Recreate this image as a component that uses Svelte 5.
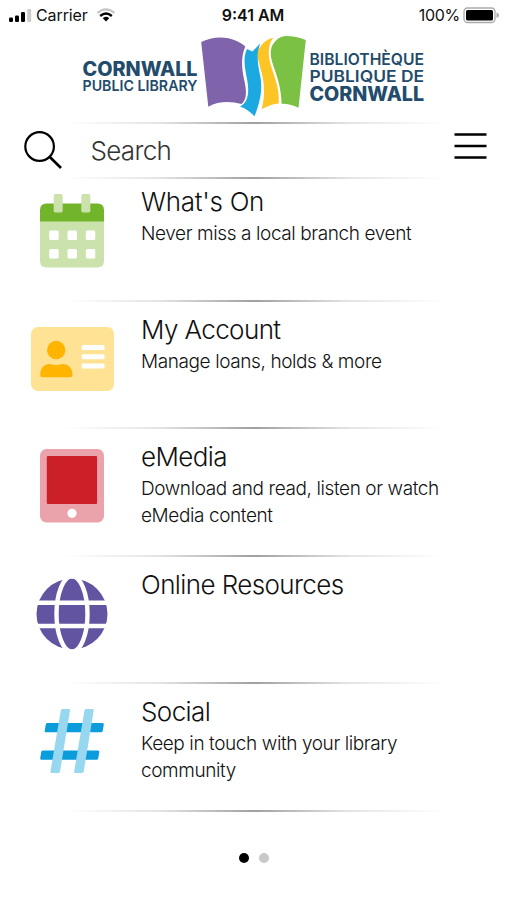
<script>
  const items = [
    { icon: 'calendar', title: "What's On", text: 'Never miss a local branch event' },
    { icon: 'card', title: 'My Account', text: 'Manage loans, holds & more' },
    { icon: 'tablet', title: 'eMedia', text: 'Download and read, listen or watch eMedia content' },
    { icon: 'globe', title: 'Online Resources', text: '' },
    { icon: 'hash', title: 'Social', text: 'Keep in touch with your library community' }
  ]

  const pages = 2
  let page = $state(0)
</script>

<div class="app">
  <div class="status">
    <div class="status-side">
      <svg width="23" height="13" viewBox="0 0 23 13">
        <rect x="0" y="8.5" width="4" height="4.5" rx="1.2" />
        <rect x="6" y="6.5" width="4" height="6.5" rx="1.2" />
        <rect x="12" y="3" width="4" height="10" rx="1.2" />
        <rect x="18.2" y="0" width="4" height="13" rx="1.2" fill="#ccc" />
      </svg>
      <span class="carrier">Carrier</span>
      <svg class="wifi" width="20" height="14" viewBox="0 0 20 14">
        <path d="M1.5 4.8Q10-2.2 18.5 4.8" fill="none" stroke="#c4c4c4" stroke-width="2.2" />
        <path d="M4.2 8Q10 3 15.8 8" fill="none" stroke="#000" stroke-width="2.4" />
        <path d="M6.8 10.2Q10 7.4 13.2 10.2L10 13.4Z" />
      </svg>
    </div>
    <span class="time">9:41 AM</span>
    <div class="status-side right">
      <span class="percent">100%</span>
      <svg width="37" height="17" viewBox="0 0 37 17">
        <rect x="1" y="1" width="31" height="14.5" rx="3.5" fill="#fff" stroke="#aaa" stroke-width="1.3" />
        <rect x="3" y="3" width="27" height="10.5" rx="1.5" />
        <path d="M33.5 5.6Q36 6 36 8.3Q36 10.6 33.5 11Z" fill="#aaa" />
      </svg>
    </div>
  </div>

  <header>
    <svg class="logo" width="350" height="92" viewBox="78.500 30 350 92">
      <g class="logo-text">
        <text x="82" y="75.5" font-size="19.5" font-weight="800" textLength="115" lengthAdjust="spacingAndGlyphs">CORNWALL</text>
        <text x="82" y="91.3" font-size="15" font-weight="600" textLength="115" lengthAdjust="spacingAndGlyphs">PUBLIC LIBRARY</text>
        <text x="309" y="65.3" font-size="16" font-weight="600" textLength="114.5" lengthAdjust="spacingAndGlyphs">BIBLIOTHÈQUE</text>
        <text x="309" y="81.6" font-size="16" font-weight="600" textLength="114.5" lengthAdjust="spacingAndGlyphs">PUBLIQUE DE</text>
        <text x="309" y="100.8" font-size="19.5" font-weight="800" textLength="114.5" lengthAdjust="spacingAndGlyphs">CORNWALL</text>
      </g>
      <path fill="#7f64ab" d="M200.700 42C213 35.500 232 35 244.800 46.500C240.500 56 241 67 243.500 79C246 90 247 99 241 104C230 101 218 101 207.800 106.700Z" />
      <path fill="#1ca9e1" d="M246.500 49L252 51.500L259.700 43.500C256 54 257 64 259.500 75C262 86 261 99 254 116.300Q247 109 239.500 106.500C248 102 249 92 246.500 79C244 67 242.500 57 246.500 49Z" />
      <path fill="#fdc425" d="M257.700 50Q263 40 272.700 37.800C266.500 46 267.500 57 271.500 69C276 82 279 92 278.200 103.500Q270 104 261.200 109.200C264.500 97 264 85 261.500 74C259 63 256 58 257.700 50Z" />
      <path fill="#7bc143" d="M272 45Q277 36.500 285 36Q296 36 305.300 40L298 107.700Q289 103.500 281 103.800C281 92 278 80 274 69C270 58 269 51 272 45Z" />
    </svg>
  </header>

  <div class="divider"></div>

  <div class="search">
    <svg width="40" height="40" viewBox="0 0 40 40" fill="none" stroke="#000">
      <circle cx="15.600" cy="16.500" r="14.300" stroke-width="2.200" />
      <path d="M25.800 27L37 38" stroke-width="2.600" />
    </svg>
    <span class="search-text">Search</span>
    <svg class="menu" width="33" height="28" viewBox="0 0 33 28" stroke="#000" stroke-width="2.300">
      <path d="M0.500 2.500H32.500M0.500 14H32.500M0.500 25.500H32.500" />
    </svg>
  </div>

  <div class="divider"></div>

  <main>
    {#each items as item}
      <div class="item">
        <div class="icon">
          {#if item.icon === 'calendar'}
            <svg width="64" height="74" viewBox="0 0 64 74">
              <path fill="#cbe2ad" d="M0 27H64V67Q64 73.500 57.500 73.500H6.500Q0 73.500 0 67Z" />
              <path fill="#73b52a" d="M0 27.500V16Q0 9.500 6.500 9.500H57.500Q64 9.500 64 16V27.500Z" />
              <g fill="#cbe2ad">
                <rect x="13.700" y="0" width="9" height="18.500" rx="1.800" />
                <rect x="41.300" y="0" width="9" height="18.500" rx="1.800" />
              </g>
              <g fill="#fff">
                {#each [36.5, 55] as y}
                  {#each [9.2, 27.5, 45.8] as x}
                    <rect {x} {y} width="9.500" height="9.500" rx="1.500" />
                  {/each}
                {/each}
              </g>
            </svg>
          {:else if item.icon === 'card'}
            <svg width="83" height="64" viewBox="0 0 83 64">
              <rect width="83" height="64" rx="7" fill="#ffe294" />
              <g fill="#ffb500">
                <circle cx="25.200" cy="23" r="9.200" />
                <path d="M9.200 48.500C9.200 40 14 37 19 37Q25.500 39 31.500 37C37 37 41.500 40.500 41.500 48Q41.500 50.300 39 50.300H11.500Q9.200 50.300 9.200 48.500Z" />
              </g>
              <g fill="#fff">
                <rect x="50.700" y="18" width="22.800" height="5" rx="1.200" />
                <rect x="50.700" y="27.200" width="22.800" height="5" rx="1.200" />
                <rect x="50.700" y="36.500" width="22.800" height="5" rx="1.200" />
              </g>
            </svg>
          {:else if item.icon === 'tablet'}
            <svg width="64" height="74" viewBox="0 0 64 74">
              <rect width="64" height="73.500" rx="6.500" fill="#eaa3aa" />
              <rect x="6.800" y="7" width="50.300" height="48" rx="1" fill="#cb2027" />
              <circle cx="32" cy="64.300" r="4.600" fill="#fff" />
            </svg>
          {:else if item.icon === 'globe'}
            <svg width="72" height="72" viewBox="0 0 72 72">
              <circle cx="36" cy="36" r="35.500" fill="#6354a1" />
              <g fill="none" stroke="#fff" stroke-width="4.400">
                <path d="M0 24.800H72M0 48H72" />
                <ellipse cx="36" cy="36" rx="15.500" ry="37.700" />
              </g>
            </svg>
          {:else}
            <svg width="64" height="64" viewBox="0 0 64 64">
              <g fill="#0b9ddb">
                <path d="M7.500 14H62.500Q64 14 63.800 15.500L62.700 22Q62.500 23.200 61 23.200H6Q4.500 23.200 4.700 21.700L5.800 15.200Q6 14 7.500 14Z" />
                <path d="M3 41.500H58Q59.500 41.500 59.300 43L58.200 49.500Q58 50.700 56.500 50.700H1.500Q0 50.700 .2 49.200L1.300 42.700Q1.500 41.500 3 41.500Z" />
              </g>
              <g fill="#98d7f0">
                <path d="M22.500 0H28.500Q30.200 0 30 1.800L20 62.500Q19.700 64 18.200 64H12Q10.200 64 10.500 62.200L20.800 1.500Q21 0 22.500 0Z" />
                <path d="M46.200 0H52.200Q53.900 0 53.700 1.800L43.700 62.500Q43.400 64 41.900 64H35.700Q33.900 64 34.200 62.200L44.500 1.500Q44.700 0 46.200 0Z" />
              </g>
            </svg>
          {/if}
        </div>
        <div class="info">
          <h2>{item.title}</h2>
          {#if item.text}
            <p>{item.text}</p>
          {/if}
        </div>
      </div>
      <div class="divider"></div>
    {/each}
  </main>

  <div class="dots">
    {#each Array(pages) as _, i}
      <button class="dot" class:active={page === i} aria-label="Page {i + 1}" onclick={() => page = i}></button>
    {/each}
  </div>
</div>

<style>
  :global(body) {
    background: #fff;
  }

  .app {
    width: 507px;
    height: 900px;
    overflow: hidden;
    background: #fff;
    color: #111;
    font-family: Inter, 'Liberation Sans', sans-serif;
    font-weight: 300;
  }

  svg {
    display: block;
  }

  .status {
    display: grid;
    grid-template-columns: 1fr auto 1fr;
    align-items: center;
    height: 30px;
    padding: 0 7px 0 9px;
    box-sizing: border-box;
    font-size: 16px;
    font-weight: 400;
  }

  .status-side {
    display: flex;
    align-items: center;
    gap: 4px;
  }

  .carrier {
    letter-spacing: -0.1px;
  }

  .right {
    justify-content: flex-end;
  }

  .percent {
    letter-spacing: -0.3px;
    margin-right: -1px;
  }

  .wifi {
    margin-left: 4px;
  }

  .time {
    font-weight: 600;
    margin: 0 2px 0 -1px;
  }

  header {
    display: flex;
    justify-content: center;
    height: 92px;
  }

  .logo-text {
    fill: #234b6b;
  }

  .divider {
    width: 380px;
    height: 2px;
    margin: 0 auto;
    background: linear-gradient(90deg, #fff, #e4e4e4 25%, #a0a0a0 50%, #e4e4e4 75%, #fff);
  }

  .search {
    display: flex;
    align-items: center;
    height: 52.500px;
    padding: 0 20px 0 24px;
  }

  .search-text {
    flex: 1;
    margin-left: 26.500px;
    font-size: 26px;
    letter-spacing: -0.7px;
    color: #333;
  }

  .menu {
    margin-top: -9px;
  }

  .item {
    display: flex;
    height: 125.600px;
  }

  .item:first-child {
    height: 121px;
  }

  .item:first-child .icon {
    height: 105px;
  }

  .item:first-child h2 {
    margin-top: 6.500px;
    letter-spacing: -0.3px;
  }

  .icon {
    display: flex;
    align-items: center;
    justify-content: center;
    width: 144px;
    height: 114px;
    flex: none;
  }

  .info {
    width: 320px;
    margin-left: -3px;
  }

  h2 {
    margin: 11px 0 0;
    font-size: 26px;
    line-height: 33px;
    font-weight: 300;
    letter-spacing: -0.600px;
  }

  p {
    margin: 2px 0 0;
    font-size: 19px;
    line-height: 27px;
    letter-spacing: -0.400px;
  }

  .dots {
    display: flex;
    justify-content: center;
    gap: 10px;
    margin-top: 41.500px;
  }

  .dot {
    width: 10px;
    height: 10px;
    padding: 0;
    border: none;
    border-radius: 50%;
    background: #c8c8c8;
  }

  .dot.active {
    background: #000;
  }
</style>
